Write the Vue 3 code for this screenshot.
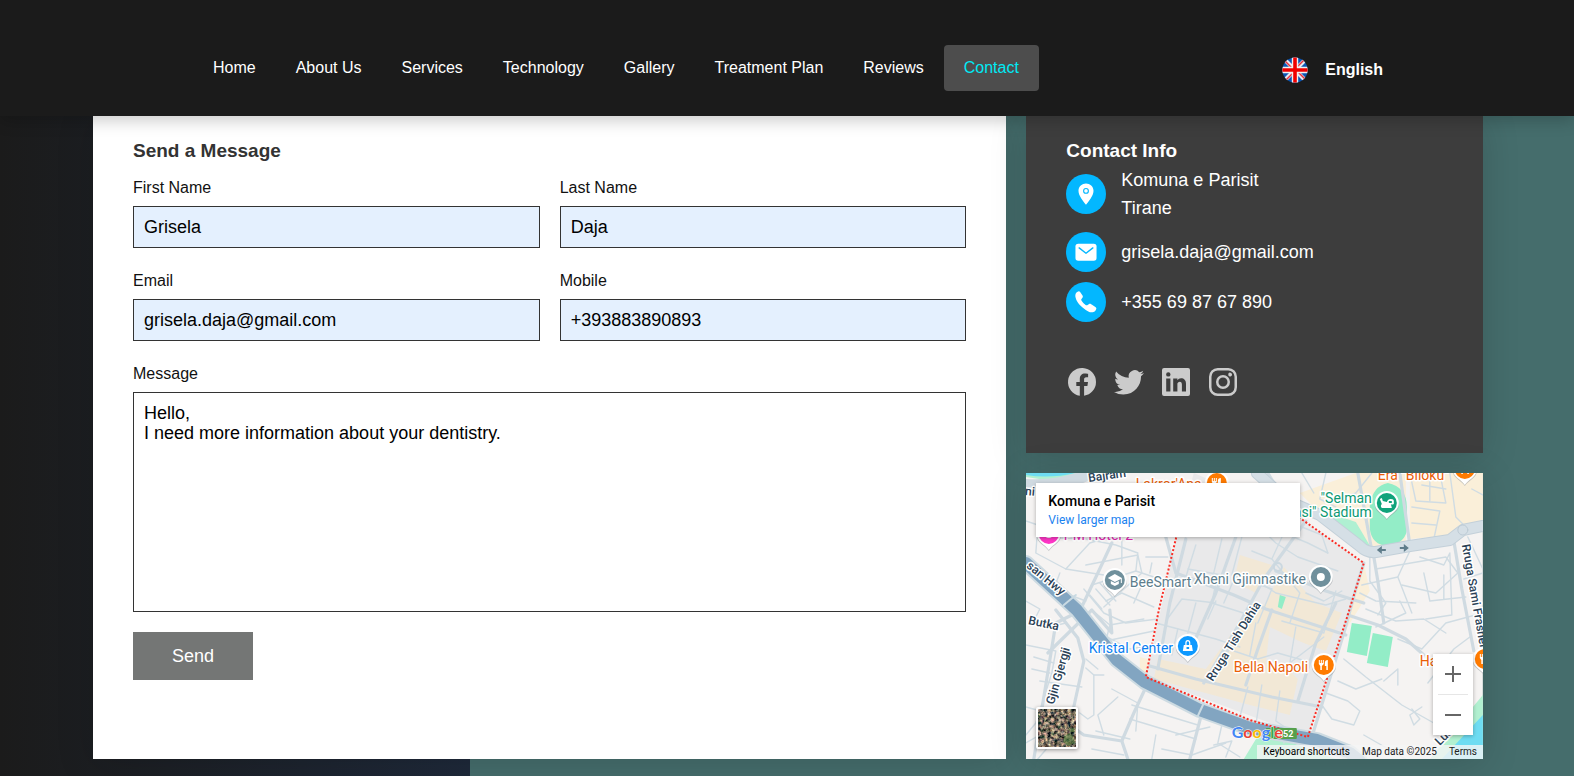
<script setup>
import { ref } from 'vue'

const links = ['Home', 'About Us', 'Services', 'Technology', 'Gallery', 'Treatment Plan', 'Reviews', 'Contact']
const current = 'Contact'

const fields = ref([
  { id: 'first', label: 'First Name', type: 'text', value: 'Grisela' },
  { id: 'last', label: 'Last Name', type: 'text', value: 'Daja' },
  { id: 'email', label: 'Email', type: 'email', value: 'grisela.daja@gmail.com' },
  { id: 'mobile', label: 'Mobile', type: 'tel', value: '+393883890893' }
])
const message = ref('Hello,\nI need more information about your dentistry.')

const socials = [
  { name: 'Facebook', d: 'M30 16A14 14 0 1 0 13.8 29.8V20H10.300V16H13.800V12.900C13.800 9.400 15.900 7.500 19 7.500C20.500 7.500 22.100 7.800 22.100 7.800V11.200H20.300C18.600 11.200 18.100 12.300 18.100 13.300V16H22L21.400 20H18.100V29.800A14 14 0 0 0 30 16Z' },
  { name: 'Twitter', d: 'M31 7.100a12.500 12.500 0 0 1-3.500 1 6.200 6.200 0 0 0 2.700-3.400 12.300 12.300 0 0 1-3.900 1.500 6.150 6.150 0 0 0-10.500 5.600A17.500 17.500 0 0 1 3.100 5.400a6.150 6.150 0 0 0 1.900 8.200 6.100 6.100 0 0 1-2.800-.8v.1a6.150 6.150 0 0 0 4.900 6 6.200 6.200 0 0 1-2.800.1 6.150 6.150 0 0 0 5.700 4.300A12.300 12.300 0 0 1 1 25.900 17.400 17.400 0 0 0 10.400 28.600C21.700 28.600 28 19.200 28 11.100v-.8A12.500 12.500 0 0 0 31 7.100Z' },
  { name: 'LinkedIn', d: 'M28 2H4.200A2.100 2.100 0 0 0 2 4V28a2.100 2.100 0 0 0 2.200 2H28a2 2 0 0 0 2-2V4a2 2 0 0 0-2-2ZM10.400 25.500H6.200V12.500h4.200ZM8.300 10.600a2.200 2.200 0 1 1 0-4.400 2.200 2.200 0 0 1 0 4.400ZM26 25.500h-4.100V18.600c0-1.700-.6-2.900-2.200-2.900a2.400 2.400 0 0 0-2.200 1.600 3 3 0 0 0-.1 1.100V25.500h-4.200V12.500h4.200v1.800a4.200 4.200 0 0 1 3.700-2.100c2.800 0 4.900 1.800 4.900 5.600Z' },
  { name: 'Instagram', d: 'M21.300 4.500a6.200 6.200 0 0 1 6.200 6.200v10.600a6.200 6.200 0 0 1-6.200 6.200H10.700a6.200 6.200 0 0 1-6.200-6.200V10.700a6.200 6.200 0 0 1 6.200-6.200H21.300m0-2.500H10.700A8.700 8.700 0 0 0 2 10.700v10.600A8.700 8.700 0 0 0 10.700 30h10.600A8.700 8.700 0 0 0 30 21.300V10.700A8.700 8.700 0 0 0 21.300 2ZM23.600 10.400a1.900 1.900 0 1 1 0-3.700 1.900 1.900 0 0 1 0 3.700ZM16 11.500a4.500 4.500 0 1 1 0 9 4.500 4.500 0 0 1 0-9m0-2.500a7 7 0 1 0 0 14 7 7 0 0 0 0-14Z' }
]

const minorRoads = [
  'M0 48L12 52L10 80L40 96L64 70L96 60', 'M12 64L60 66L90 72L112 80L110 98', 'M40 96L78 102M34 100L28 116L60 128',
  'M60 92L112 82M112 82L116 100L78 134', 'M66 112L110 98L134 106', 'M58 116L78 140L100 150L132 146', 'M80 128L96 120L128 134',
  'M70 116L84 132M64 122L76 136M74 110L90 128', 'M96 66V92M108 130L116 112L138 110', 'M120 84H142M126 90L124 100',
  'M0 128L14 136L8 148L24 154L40 150', 'M0 172L30 178L26 200L10 250L0 262', 'M8 184L28 190M14 208L56 214M6 196L24 200',
  'M66 137L84 152L118 146M84 152L80 168L128 158', 'M74 160L104 176L126 172',
  'M60 195L68 202V242L62 246L54 240', 'M72 196L60 186M68 202H78', 'M0 234L22 240L48 236M0 270L14 262L24 272L12 286M22 262L42 272',
  'M86 216L112 230L110 258M106 232L172 252M104 246L170 266M70 258L104 266M66 276L98 282', 'M92 224L72 242L78 262',
  'M130 262L126 286M150 262L184 254M136 276L166 282L200 270', 'M188 272L206 268L200 284M196 252L192 270L214 284',
  'M170 72L160 104L190 110L186 130L224 142M196 66L186 108', 'M216 64L206 102L246 116M162 96L196 102M190 128L182 146',
  'M130 150L160 158L190 166L214 174M140 148L156 126L190 130', 'M170 130L162 160M152 156L146 182M210 102L198 130',
  'M226 78L246 86L274 120L264 150M246 86L258 60L282 70L302 80', 'M238 58L250 70L272 84L312 98M302 80L296 62L276 54',
  'M232 108L250 120L300 132L320 126M246 116L232 150', 'M256 148L298 160L310 118M270 154L264 190L298 164', 'M280 120L298 128L316 118',
  'M208 178L232 186L252 180L280 188M230 150L224 182M222 214L214 244M236 212L230 252', 'M254 218L250 248L262 256L258 270',
  'M300 220L322 228L334 238L328 252L306 246L296 232M312 208L330 216L356 206', 'M318 186L340 204L376 232L408 250',
  'M386 236L394 246L388 252L384 242L396 234M402 210L428 176L444 164', 'M338 262L380 286M358 208L372 196L372 212',
  'M344 84V108L360 130L352 142M384 78L372 104L336 112', 'M350 96L420 84L432 100L410 120L376 112', 'M394 84L418 92L424 80L426 142L400 146',
  'M334 120L350 128L390 130M372 104L386 140M340 136L370 148L398 146L420 160', 'M398 100L404 128L440 124M418 102V126M438 106L457 100',
  'M384 0L390 28L420 30L414 0M396 12L420 16M386 34L414 38L408 66', 'M386 50L410 52M424 0L430 44L440 54M404 6V28M446 16L457 22M442 64L457 96',
  'M346 0L330 20L320 24M300 0L294 26L310 34M276 0L288 20', 'M350 154L380 140L374 128M372 166L396 176L420 150L457 140'
]
const midRoads = [
  'M86 70L72 100L54 138L30 150L8 286', 'M84 137L86 160L66 137L22 180', 'M30 137L52 165L58 188L44 252L58 262L96 268L102 286',
  'M122 210L108 240L96 268', 'M176 240L164 286', 'M160 66L144 130L132 196', 'M124 193L170 206L246 224L296 234',
  'M140 64L150 100L208 122L240 136L320 162', 'M178 210L214 150L238 106L280 48', 'M214 150L190 204M166 174L190 120L210 64',
  'M250 98L300 118L338 130', 'M272 228L290 170L310 130', 'M246 137L232 176L220 212', 'M338 90L330 116L318 160L286 264',
  'M322 142L352 152L380 166L398 182', 'M347 78L352 108L358 150', 'M428 68L436 116L448 178', 'M242 0L260 30L294 42', 'M332 0L346 78M374 0L384 72',
  'M0 14L60 0'
]
const roadNames = [
  { t: 'Bajram', x: 63, y: 9, r: -8 }, { t: 'ni', x: -1, y: 22, r: 5 }, { t: 'san Hwy', x: 0, y: 94, r: 39 },
  { t: 'Butka', x: 2, y: 151, r: 12 }, { t: 'Gjin Gjergji', x: 28, y: 232, r: -74 }, { t: 'Rruga Tish Dahia', x: 187, y: 209, r: -58 },
  { t: 'Rruga Sami Frasheri', x: 436, y: 72, r: 80 }, { t: 'Lua', x: 414, y: 273, r: -45 }
]
const places = [
  { t: 'BeeSmart', x: 104, y: 114, c: 'slate' }, { t: 'Xheni Gjimnastike', x: 168, y: 111, c: 'slate' },
  { t: 'Kristal Center', x: 63, y: 180, c: 'blue' }, { t: 'Bella Napoli', x: 208, y: 199, c: 'orange' },
  { t: 'Era "Biloku"', x: 352, y: 7, c: 'orange' }, { t: "Lakror'Ana", x: 110, y: 16, c: 'orange' },
  { t: 'PM Hotel 2', x: 38, y: 67, c: 'pink' }, { t: 'Ha', x: 394, y: 193, c: 'orange' }
]
const pins = [
  { x: 89, y: 107, c: '#70909c', k: 'school' }, { x: 295, y: 104, c: '#70909c', k: 'dot' }, { x: 361, y: 30, c: '#10a37b', k: 'stadium' },
  { x: 162, y: 173, c: '#0d99ff', k: 'bag' }, { x: 298, y: 192, c: '#ff7b00', k: 'food' }, { x: 459, y: 186, c: '#ff7b00', k: 'food' },
  { x: 439, y: -4, c: '#ff7b00', k: 'food' }, { x: 191, y: 10, c: '#ff7b00', k: 'food' }, { x: 23, y: 61, c: '#ff36c7', k: 'dot' }
]
</script>

<template>
  <div class="page">
    <header class="header">
      <nav class="nav">
        <a v-for="l in links" :key="l" href="#" class="nav-link" :class="{ active: l === current }">{{ l }}</a>
      </nav>
      <button type="button" class="language">
        <svg class="flag" viewBox="0 0 26 26" aria-hidden="true">
          <defs><clipPath id="disc"><circle cx="13" cy="13" r="12.600" /></clipPath></defs>
          <g clip-path="url(#disc)">
            <path fill="#0a55b4" d="M0 0H26V26H0Z" />
            <path stroke="#e6e9f0" stroke-width="4" d="M2 2L24 24M24 2L2 24" />
            <path stroke="#e8303c" stroke-width="1.500" d="M3 4L11 12M15 14L23 22M22 3L14 11M12 15L4 23" />
            <path stroke="#f0f0f0" stroke-width="6.400" d="M13 0V26M0 13H26" />
            <path stroke="#f00000" stroke-width="3.600" d="M13 0V26M0 13H26" />
          </g>
        </svg>
        <span>English</span>
      </button>
    </header>

    <main class="contact">
      <form class="card form-card" @submit.prevent>
        <h3 class="title">Send a Message</h3>
        <div class="fields">
          <div v-for="f in fields" :key="f.id" class="field">
            <label :for="f.id">{{ f.label }}</label>
            <input :id="f.id" v-model="f.value" :type="f.type">
          </div>
          <div class="field wide">
            <label for="message">Message</label>
            <textarea id="message" v-model="message"></textarea>
          </div>
        </div>
        <button type="submit" class="send">Send</button>
      </form>

      <div class="side">
        <section class="card info-card">
          <h3 class="title">Contact Info</h3>
          <ul class="info-list">
            <li>
              <span class="badge">
                <svg viewBox="0 0 24 24"><path fill="#fff" d="M12 0.500C7.800 0.500 3.800 3.800 3.800 8.500c0 5.600 5.500 11.800 8.200 15.300C14.700 20.300 20.200 14.100 20.200 8.500c0-4.700-4-8-8.200-8Z" /><circle cx="12" cy="8.600" r="2.600" fill="none" stroke="#03b7ff" stroke-width="1.200" /></svg>
              </span>
              <span>Komuna e Parisit<br>Tirane</span>
            </li>
            <li>
              <span class="badge">
                <svg viewBox="0 0 24 24"><rect x="0.500" y="3" width="23" height="18.500" rx="3" fill="#fff" /><path fill="none" stroke="#03b7ff" stroke-width="1.500" stroke-linecap="round" stroke-linejoin="round" d="M4.500 7.500L12 13.300L19.500 7.500" /></svg>
              </span>
              <a href="mailto:grisela.daja@gmail.com">grisela.daja@gmail.com</a>
            </li>
            <li>
              <span class="badge">
                <svg viewBox="0 0 24 24"><path fill="#fff" d="M18.200 23.300c-1 0-2.500-.4-4.600-1.600C11 20.200 9 18.900 6.400 16.300C3.900 13.800 2.700 12.200 1.500 9.700C.3 7 .2 5.200.5 3.900C.8 2.600 1.400 1.900 2.300 1.200C2.700.9 3.200.7 3.600.5C4.300.2 5 .3 5.600 1.100L8.200 4.800c.5.800.5 1.900-.1 2.600L6.900 9c-.2.300-.2.700 0 1.100.4.800 1.200 1.900 2.200 2.900s2.300 2.100 3.100 2.500c.4.200.8.200 1.100 0L15 14.400c.8-.5 1.800-.5 2.600 0c1.100.7 3.200 2 4.600 3c1 .7 1.300 1.500 1 2.300c-.2.500-.5 1.100-.8 1.600c-.6.900-1.300 1.300-2.200 1.600c-.7.300-1.300.4-2 .4Z" /></svg>
              </span>
              <a href="tel:+355698767890">+355 69 87 67 890</a>
            </li>
          </ul>
          <div class="socials">
            <a v-for="s in socials" :key="s.name" href="#" :aria-label="s.name">
              <svg viewBox="0 0 32 32"><path :d="s.d" fill="#cbcbcb" fill-rule="evenodd" /></svg>
            </a>
          </div>
        </section>

        <section class="map">
          <svg class="tiles" viewBox="0 0 457 286" preserveAspectRatio="xMidYMid slice">
            <rect width="457" height="286" fill="#f5f3f2" />
            <path fill="#faefd9" d="M274 20L330 0H380V70L346 76L288 34ZM384 0H457V50L430 62L384 66ZM310 100L338 90L344 118L318 160L304 130ZM114 184L136 190L126 206L114 200Z" />
            <path fill="#e9e9ea" d="M151 65L168 0L214 20L274 45L338 90L321 145L282 264L120 204Z" />
            <path fill="#f2e8d6" d="M214 82L246 92L230 120L208 108ZM132 186L180 196L206 160L240 130L258 94L290 130L316 140L300 178L272 168L262 196L272 206L264 242L224 232L128 206Z" />
            <path fill="#e9e9ea" d="M244 154L290 176L276 202L240 190Z" />
            <path fill="#aff0d2" d="M286 34L330 49L346 76L322 68Z" />
            <path fill="#93edc7" d="M362 10Q381 14 381 34V58Q378 71 362 73Q346 72 344 56V32Q347 13 362 10ZM326 150L346 153L341 183L321 179ZM347 160L367 164L362 194L341 190ZM254 122L260 124L256 136L252 134Z" />
            <path fill="#b1f0d0" d="M218 286L235 258L310 286ZM457 222L404 286H457ZM0 0H60L40 6Q20 8 0 4Z" />
            <path fill="#6edcf2" d="M457 242L416 286H457ZM0 0H50Q24 6 0 2Z" />
            <g fill="none" stroke-linejoin="round" stroke-linecap="round">
              <path v-for="(d, i) in minorRoads" :key="i" :d="d" stroke="#d0dce3" stroke-width="1.400" />
              <path v-for="(d, i) in midRoads" :key="'m' + i" :d="d" stroke="#cfdae1" stroke-width="3.200" />
              <path stroke="#c3d0d9" stroke-width="12" d="M231 0L262 28L294 42L334 73Q341 80 350 79L384 73L424 67L437 57L457 53" />
              <path stroke="#d5dfe6" stroke-width="10" d="M231 0L262 28L294 42L334 73Q341 80 350 79L384 73L424 67L437 57L457 53" />
              <path stroke="#d0dae1" stroke-width="12" d="M0 12Q36 14 66 0" />
              <circle cx="437" cy="57" r="5" fill="#d5dfe6" stroke="#bdcbd5" />
              <circle cx="252" cy="94" r="4" stroke="#cbd8e0" stroke-width="2" />
              <path stroke="#cddbe2" stroke-width="16" d="M0 90L51 137L91 187L119 209L174 237L224 255L291 267L324 280L334 288" />
              <path stroke="#82a5c1" stroke-width="12" d="M0 90L51 137L91 187L119 209L174 237L224 255L291 267L324 280L334 288" />
              <path stroke="#c9dae3" stroke-width="2" d="M38 132L50 122M172 243L178 230" />
              <path stroke="#fa2d25" stroke-width="2" stroke-linecap="butt" stroke-dasharray="2 2" d="M155 45L133 137L120 204L224 247L282 264L321 145L338 90L274 45" />
            </g>
            <path fill="#607d8b" d="M351 77L356 73V76H360V78H356V81ZM383 75L378 71V74H374V76H378V79Z" />

            <g class="road-names">
              <text v-for="n in roadNames" :key="n.t" :transform="`translate(${n.x} ${n.y}) rotate(${n.r})`">{{ n.t }}</text>
            </g>
            <g class="places">
              <text v-for="p in places" :key="p.t" :x="p.x" :y="p.y" :class="p.c">{{ p.t }}</text>
              <text x="346" y="30" text-anchor="end" class="green">"Selman</text>
              <text x="346" y="44" text-anchor="end" class="green">Stërmasi" Stadium</text>
            </g>

            <g v-for="(p, i) in pins" :key="i" :transform="`translate(${p.x} ${p.y})`">
              <path fill="#8d9499" opacity=".5" d="M-12 2A12 12 0 0 1 12 2C12 9 4 11 0 17C-4 11 -12 9 -12 2Z" />
              <path fill="#fff" d="M-12 0A12 12 0 0 1 12 0C12 8 4 10 0 16C-4 10 -12 8 -12 0Z" />
              <circle r="10" :fill="p.c" />
              <circle v-if="p.k === 'dot'" r="4" fill="#fff" />
              <path v-if="p.k === 'food'" fill="#fff" d="M-5 -5H-4V-2H-3V-5H-2V-2H-1V-5H0V-1L-2 1V5H-3.500V1L-5 -1ZM4 -5V5H2.500V1H1V-2Q1 -5 4 -5Z" />
              <path v-if="p.k === 'school'" fill="#fff" d="M0 -6L7 -2V3H6V-1L0 2L-7 -2ZM-4 1L0 3L4 1V4L0 6L-4 4Z" />
              <path v-if="p.k === 'bag'" fill="#fff" fill-rule="evenodd" d="M-4 -1H-2.500V-3Q-2.500 -6 0 -6Q2.500 -6 2.500 -3V-1H4L5 5H-5ZM-1.300 -1H1.300V-3Q1.300 -4.700 0 -4.700Q-1.300 -4.700 -1.300 -3ZM-1.300 1V3H1.300V1Z" />
              <path v-if="p.k === 'stadium'" fill="#fff" fill-rule="evenodd" d="M-7 -4L-5 -5L-4 -2L0 -1Q1 -4 4 -4Q7 -4 7 -2V1Q5 2 4 1L5 5H-5Q-7 3 -5 1ZM2 -2V0H5V-2Z" />
            </g>

            <rect x="240" y="255" width="31" height="11" rx="1" fill="#56a04d" />
            <text x="252" y="264" class="shield">852</text>
            <text x="206" y="265" class="google"><tspan fill="#4285f4">G</tspan><tspan fill="#ea4335">o</tspan><tspan fill="#fbbc04">o</tspan><tspan fill="#4285f4">g</tspan><tspan fill="#34a853">l</tspan><tspan fill="#ea4335">e</tspan></text>
          </svg>

          <div class="place-card">
            <strong>Komuna e Parisit</strong>
            <a href="#">View larger map</a>
          </div>
          <button type="button" class="satellite" aria-label="Show satellite imagery">
            <svg viewBox="0 0 38 38">
              <filter id="terrain" x="0" y="0" width="100%" height="100%" color-interpolation-filters="sRGB">
                <feTurbulence type="fractalNoise" baseFrequency="0.300" numOctaves="4" seed="4" />
                <feColorMatrix values="1.600 0 0 0 -0.330  1.300 .3 0 0 -0.370  1 .2 .2 0 -0.330  0 0 0 0 1" />
              </filter>
              <rect width="38" height="38" filter="url(#terrain)" />
              <path fill="#4e7a3c" opacity=".6" d="M26 28L31 24L35 27L37 34L30 37L25 33ZM30 20L36 19L37 23L32 23Z" />
            </svg>
          </button>
          <div class="zoom">
            <button type="button" aria-label="Zoom in"><svg viewBox="0 0 18 18"><path fill="#666" d="M8 1H10V8H17V10H10V17H8V10H1V8H8Z" /></svg></button>
            <button type="button" aria-label="Zoom out"><svg viewBox="0 0 18 18"><path fill="#666" d="M1 8H17V10H1Z" /></svg></button>
          </div>
          <div class="credits">
            <button type="button">Keyboard shortcuts</button>
            <span>Map data ©2025</span>
            <a href="#">Terms</a>
          </div>
        </section>
      </div>
    </main>
  </div>
</template>

<style>
body {
  margin: 0;
}
</style>

<style scoped>
* {
  box-sizing: border-box;
}
.page {
  min-height: 100vh;
  font-family: Arial, "Liberation Sans", sans-serif;
  font-size: 16px;
  background: linear-gradient(90deg, #1b1b1b, #1e293a) 0 0 / 470px 100% no-repeat, #456d6c;
}
a {
  color: inherit;
  text-decoration: none;
}
button {
  font: inherit;
  border: 0;
  padding: 0;
  cursor: pointer;
}
.header {
  position: relative;
  z-index: 2;
  display: flex;
  justify-content: space-between;
  align-items: center;
  height: 116px;
  padding: 20px 191px 0 193px;
  background: #1b1b1b;
  color: #fff;
  box-shadow: 0 5px 15px rgba(0, 0, 0, 0.2);
}
.nav {
  display: flex;
}
.nav-link {
  padding: 13px 20px;
  line-height: 20px;
  border-radius: 4px;
}
.nav-link.active {
  background: #4d4d4d;
  color: #00eaf5;
}
.language {
  display: flex;
  align-items: center;
  gap: 17px;
  padding-top: 4px;
  background: none;
  color: #fff;
  font-weight: bold;
}
.flag {
  width: 26px;
  height: 26px;
}
.contact {
  display: grid;
  grid-template-columns: 2fr 1fr;
  gap: 20px;
  padding: 0 91px 17px 93px;
}
.card {
  padding: 25px 40px 0;
  box-shadow: 0 5px 35px rgba(0, 0, 0, 0.15);
}
.form-card {
  background: #fff;
}
.title {
  margin: 0 0 17px;
  font-size: 19px;
  line-height: 20px;
  color: #333;
}
.fields {
  display: grid;
  grid-template-columns: 1fr 1fr;
  gap: 23px 20px;
}
.field {
  display: flex;
  flex-direction: column;
  gap: 8px;
  min-width: 0;
}
.wide {
  grid-column: 1 / -1;
}
label {
  line-height: 20px;
  color: #111;
}
input,
textarea {
  width: 100%;
  padding: 10px;
  border: 1px solid #333;
  border-radius: 0;
  outline: 0;
  font: inherit;
  font-size: 18px;
  line-height: 20px;
  color: #000;
}
input {
  height: 42px;
  background: #e4f0fe;
}
textarea {
  display: block;
  height: 220px;
  resize: none;
  background: #fff;
}
.send {
  width: 120px;
  height: 48px;
  margin: 20px 0 79px;
  background: #747675;
  color: #fff;
  font-size: 18px;
}
.side {
  display: grid;
  grid-template-rows: auto 1fr;
  gap: 20px;
}
.info-card {
  background: #3d3d3d;
  color: #fff;
  padding-bottom: 55px;
}
.info-card .title {
  margin-bottom: 5px;
  color: #fff;
}
.info-list {
  display: grid;
  gap: 10px;
  margin: 0 0 44px;
  padding: 0;
  list-style: none;
  font-size: 18px;
  line-height: 28px;
}
.info-list li {
  display: flex;
  align-items: center;
  gap: 15px;
}
.badge {
  display: grid;
  place-items: center;
  width: 40px;
  height: 40px;
  border-radius: 50%;
  background: #03b7ff;
}
.badge svg {
  width: 22px;
  height: 22px;
}
.socials {
  display: flex;
  gap: 15px;
}
.socials svg {
  display: block;
  width: 32px;
  height: 32px;
}
.map {
  position: relative;
  overflow: hidden;
  min-height: 286px;
  font-family: Roboto, sans-serif;
  box-shadow: 0 5px 35px rgba(0, 0, 0, 0.15);
}
.tiles {
  position: absolute;
  width: 100%;
  height: 100%;
}
.tiles text {
  paint-order: stroke;
  stroke: #fff;
  stroke-width: 3px;
  stroke-linejoin: round;
}
.road-names text {
  font-size: 12px;
  font-weight: 500;
  fill: #2a4156;
}
.places text {
  font-size: 14px;
}
.slate {
  fill: #5c7d8c;
}
.blue {
  fill: #0a80f2;
}
.orange {
  fill: #ea5e07;
}
.pink {
  fill: #e424b3;
}
.green {
  fill: #0d9973;
}
.tiles .shield {
  font-size: 9px;
  font-weight: 700;
  fill: #fff;
  stroke: none;
}
.tiles .google {
  font-family: Lato, sans-serif;
  font-size: 16px;
  font-weight: 700;
  stroke-width: 1px;
}
.place-card {
  position: absolute;
  top: 10px;
  left: 10px;
  display: flex;
  flex-direction: column;
  width: 264px;
  height: 54px;
  padding: 9px 12px;
  background: #fff;
  box-shadow: 0 1px 4px rgba(0, 0, 0, 0.3);
  font-size: 12px;
  line-height: 19px;
}
.place-card strong {
  font-size: 14px;
  font-weight: 500;
  color: #000;
}
.place-card a {
  color: #1a82f0;
}
.satellite {
  position: absolute;
  left: 10px;
  bottom: 10px;
  width: 42px;
  height: 42px;
  border: 2px solid #fff;
  border-radius: 2px;
  overflow: hidden;
  box-shadow: 0 1px 4px rgba(0, 0, 0, 0.4);
}
.satellite svg {
  display: block;
}
.zoom {
  position: absolute;
  right: 10px;
  bottom: 24px;
  width: 40px;
  padding: 0 5px;
  background: #fff;
  box-shadow: 0 1px 4px rgba(0, 0, 0, 0.3);
}
.zoom button {
  display: grid;
  place-items: center;
  width: 100%;
  height: 40px;
  background: none;
}
.zoom button + button {
  height: 41px;
  border-top: 1px solid #e6e6e6;
}
.zoom svg {
  width: 18px;
  height: 18px;
}
.credits {
  position: absolute;
  right: 0;
  bottom: 0;
  display: flex;
  gap: 12px;
  padding: 0 6px;
  background: rgba(245, 245, 245, 0.8);
  color: #222;
  font-size: 10px;
  line-height: 14px;
}
.credits button {
  background: none;
  line-height: 14px;
}
</style>
